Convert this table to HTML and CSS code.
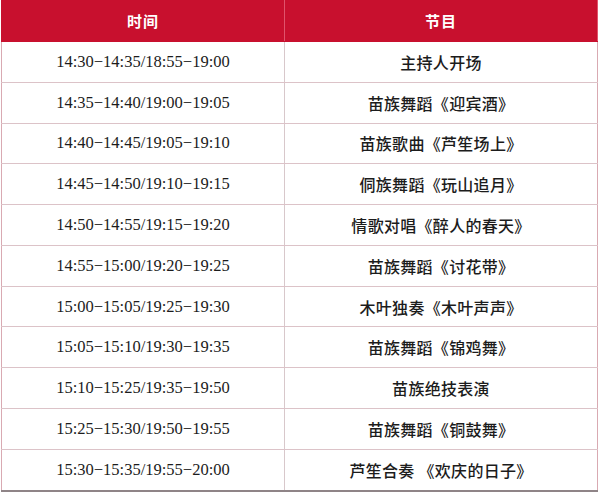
FILE: index.html
```html
<!DOCTYPE html>
<html lang="zh-CN">
<head>
<meta charset="utf-8">
<link rel="stylesheet" href="styles.css">
</head>
<body>
<table class="schedule">
  <thead>
    <tr><th class="col-time">时间</th><th class="col-prog">节目</th></tr>
  </thead>
  <tbody>
    <tr><td class="time">14:30−14:35/18:55−19:00</td><td class="prog">主持人开场</td></tr>
    <tr><td class="time">14:35−14:40/19:00−19:05</td><td class="prog">苗族舞蹈《迎宾酒》</td></tr>
    <tr><td class="time">14:40−14:45/19:05−19:10</td><td class="prog">苗族歌曲《芦笙场上》</td></tr>
    <tr><td class="time">14:45−14:50/19:10−19:15</td><td class="prog">侗族舞蹈《玩山追月》</td></tr>
    <tr><td class="time">14:50−14:55/19:15−19:20</td><td class="prog">情歌对唱《醉人的春天》</td></tr>
    <tr><td class="time">14:55−15:00/19:20−19:25</td><td class="prog">苗族舞蹈《讨花带》</td></tr>
    <tr><td class="time">15:00−15:05/19:25−19:30</td><td class="prog">木叶独奏《木叶声声》</td></tr>
    <tr><td class="time">15:05−15:10/19:30−19:35</td><td class="prog">苗族舞蹈《锦鸡舞》</td></tr>
    <tr><td class="time">15:10−15:25/19:35−19:50</td><td class="prog">苗族绝技表演</td></tr>
    <tr><td class="time">15:25−15:30/19:50−19:55</td><td class="prog">苗族舞蹈《铜鼓舞》</td></tr>
    <tr><td class="time">15:30−15:35/19:55−20:00</td><td class="prog">芦笙合奏 《欢庆的日子》</td></tr>
  </tbody>
</table>
</body>
</html>
```
FILE: styles.css
```css
html, body {
  margin: 0;
  padding: 0;
  background: #ffffff;
}

.schedule {
  margin-left: 1px;
  width: 597px;
  height: 492px;
  border-collapse: collapse;
  table-layout: fixed;
  border-bottom: 2px solid #8f8487;
}

.schedule th {
  height: 41px;
  padding: 0;
  background: #c8102e;
  color: #ffffff;
  font-family: "Noto Sans CJK SC", sans-serif;
  font-weight: 700;
  font-size: 15px;
  letter-spacing: 1px;
  text-align: center;
  vertical-align: middle;
  border-bottom: 1px solid #c8102e;
}

.schedule th.col-time {
  width: 282px;
  border-right: 1px solid #e0536b;
  border-left: 1px solid #c8102e;
}

.schedule th.col-prog {
  border-right: 1px solid #e0536b;
}

.schedule td {
  padding: 0;
  text-align: center;
  vertical-align: middle;
  color: #1c1c1c;
  border-bottom: 1px solid #dcc3c8;
}

.schedule td.time {
  font-family: "Liberation Serif", serif;
  font-size: 16.5px;
  border-left: 1px solid #d9aab2;
  border-right: 1px solid #d8c8cb;
}

.schedule td.prog {
  font-family: "Noto Sans CJK SC", sans-serif;
  font-weight: 500;
  font-size: 16px;
  letter-spacing: 0.3px;
  border-right: 1px solid #d9aab2;
}
```
